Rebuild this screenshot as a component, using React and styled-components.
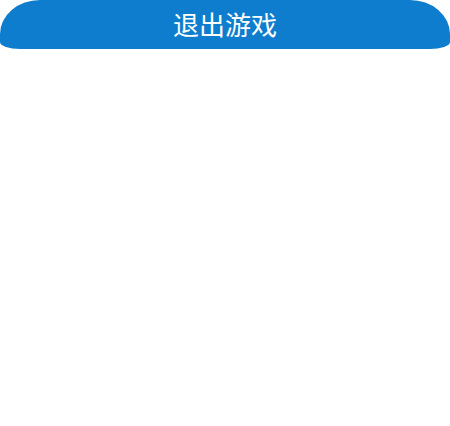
import React from "react";
import styled, { createGlobalStyle } from "styled-components";

const Global = createGlobalStyle`
  html, body { margin: 0; padding: 0; background: #ffffff; }
  body { font-family: "Noto Sans CJK SC", "Noto Sans", sans-serif; }
`;

const Page = styled.div`
  width: 450px;
  height: 426px;
  background: #ffffff;
`;

const ExitButton = styled.button`
  display: flex;
  align-items: center;
  justify-content: center;
  width: 450px;
  height: 49px;
  margin: 0;
  padding: 0 0 2px;
  border: none;
  background: #0e7dce;
  color: #ffffff;
  font-family: "Noto Sans CJK SC", sans-serif;
  font-size: 26px;
  line-height: 1;
  border-radius: 40px 40px 20px 20px / 34px 34px 7px 7px;
  cursor: pointer;
`;

export default function App() {
  return (
    <Page>
      <Global />
      <ExitButton>退出游戏</ExitButton>
    </Page>
  );
}
